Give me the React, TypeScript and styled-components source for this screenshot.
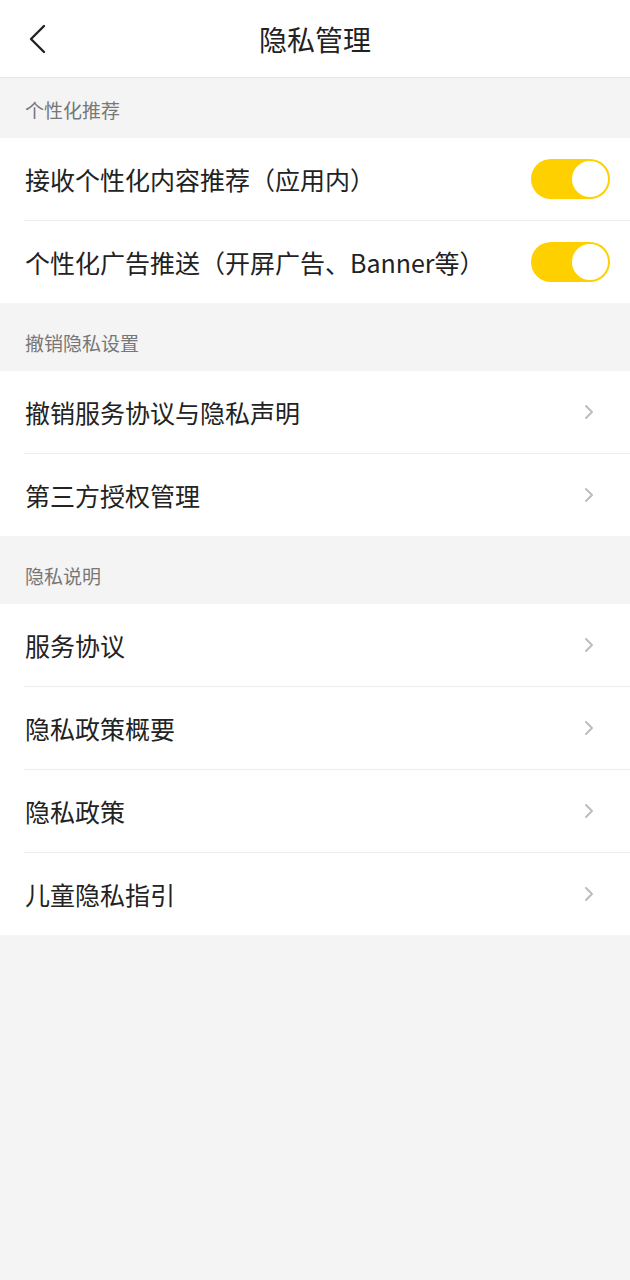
import React from 'react'
import styled, { createGlobalStyle } from 'styled-components';

const GlobalStyle = createGlobalStyle`
    html, body {
        margin: 0;
        padding: 0;
        background: #f4f4f4;
    }
    body {
        font-family: "Noto Sans CJK SC", "Noto Sans", sans-serif;
        color: #222;
    }
`

type rowType = {
    label: string;
    toggle?: boolean;
}

type sectionType = {
    title: string;
    rows: rowType[];
}

const sections: sectionType[] = [
    {
        title: "个性化推荐",
        rows: [
            { label: "接收个性化内容推荐（应用内）", toggle: true },
            { label: "个性化广告推送（开屏广告、Banner等）", toggle: true },
        ]
    },
    {
        title: "撤销隐私设置",
        rows: [
            { label: "撤销服务协议与隐私声明" },
            { label: "第三方授权管理" },
        ]
    },
    {
        title: "隐私说明",
        rows: [
            { label: "服务协议" },
            { label: "隐私政策概要" },
            { label: "隐私政策" },
            { label: "儿童隐私指引" },
        ]
    },
]

const App = () => {
    return (<>
        <GlobalStyle />
        <Page>
            <Header>
                <BackButton>
                    <svg width="20" height="30" viewBox="0 0 20 30">
                        <polyline points="16,2 3,15 16,28" fill="none" stroke="#222" strokeWidth="2.4" strokeLinecap="round" strokeLinejoin="round" />
                    </svg>
                </BackButton>
                <Title>隐私管理</Title>
            </Header>
            {sections.map((section, i) => (
                <div key={section.title}>
                    <SectionTitle first={i === 0}>{section.title}</SectionTitle>
                    <List>
                        {section.rows.map((row) => (
                            <Row key={row.label}>
                                <Label>{row.label}</Label>
                                {row.toggle ? (
                                    <Switch>
                                        <Knob />
                                    </Switch>
                                ) : (
                                    <Chevron>
                                        <svg width="10" height="16" viewBox="0 0 10 16">
                                            <polyline points="2,2 8,8 2,14" fill="none" stroke="#bdbdbd" strokeWidth="2" strokeLinecap="round" strokeLinejoin="round" />
                                        </svg>
                                    </Chevron>
                                )}
                            </Row>
                        ))}
                    </List>
                </div>
            ))}
        </Page>
    </>
    )
}

export default App;

const Page = styled.div`
    width: 630px;
    min-height: 1280px;
    background: #f4f4f4;
`

const Header = styled.div`
    position: relative;
    height: 77px;
    display: flex;
    align-items: center;
    justify-content: center;
    background: #fff;
    border-bottom: 1px solid #e6e6e6;
`

const BackButton = styled.div`
    position: absolute;
    left: 28px;
    top: 24px;
    width: 20px;
    height: 30px;
    display: flex;
`

const Title = styled.div`
    font-size: 28px;
    line-height: 1;
    color: #222;
    margin-top: 0;
`

type sectionTitleProp = {
    first?: boolean
}
const SectionTitle = styled.div<sectionTitleProp>`
    height: ${({ first }) => first ? "60px" : "68px"};
    box-sizing: border-box;
    padding: 0 25px 16px;
    display: flex;
    align-items: flex-end;
    font-size: 19px;
    line-height: 24px;
    color: #777;
`

const List = styled.div`
    background: #fff;
    padding-left: 24px;
`

const Row = styled.div`
    height: 82px;
    display: flex;
    align-items: center;
    justify-content: space-between;
    padding-right: 20px;
    border-bottom: 1px solid #ececec;
    &:last-child{
        border-bottom: none;
    }
`

const Label = styled.span`
    font-size: 25px;
    line-height: 1;
    color: #222;
    padding-left: 1px;
`

const Switch = styled.div`
    width: 79px;
    height: 40px;
    border-radius: 20px;
    background: #ffd000;
    box-sizing: border-box;
    padding: 2px;
    display: flex;
    justify-content: flex-end;
`

const Knob = styled.div`
    width: 36px;
    height: 36px;
    border-radius: 50%;
    background: #fff;
`

const Chevron = styled.div`
    display: flex;
    margin-right: 16px;
`
